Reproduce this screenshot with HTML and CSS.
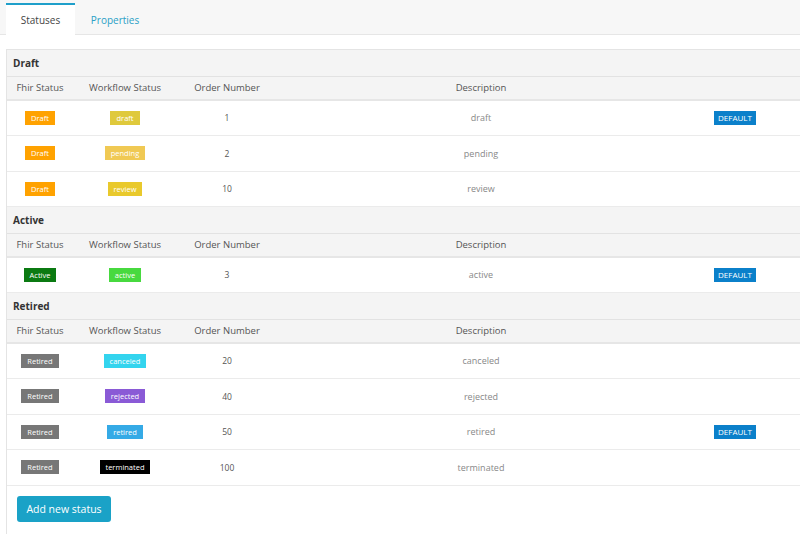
FILE: index.html
```html
<!DOCTYPE html>
<html>
<head>
<meta charset="utf-8">
<link rel="stylesheet" href="styles.css">
</head>
<body>
<div class="tabs">
  <div class="tab active">Statuses</div>
  <div class="tab">Properties</div>
</div>
<div class="panel">
  <div class="table">
    <div class="group">Draft</div>
    <div class="row head"><div>Fhir Status</div><div>Workflow Status</div><div>Order Number</div><div>Description</div><div></div></div>
    <div class="row"><div><span class="badge b-draft">Draft</span></div><div><span class="badge w-draft">draft</span></div><div class="num">1</div><div class="desc">draft</div><div><span class="default">DEFAULT</span></div></div>
    <div class="row"><div><span class="badge b-draft">Draft</span></div><div><span class="badge w-pending">pending</span></div><div class="num">2</div><div class="desc">pending</div><div></div></div>
    <div class="row"><div><span class="badge b-draft">Draft</span></div><div><span class="badge w-review">review</span></div><div class="num">10</div><div class="desc">review</div><div></div></div>

    <div class="group">Active</div>
    <div class="row head"><div>Fhir Status</div><div>Workflow Status</div><div>Order Number</div><div>Description</div><div></div></div>
    <div class="row"><div><span class="badge b-active">Active</span></div><div><span class="badge w-active">active</span></div><div class="num">3</div><div class="desc">active</div><div><span class="default">DEFAULT</span></div></div>

    <div class="group">Retired</div>
    <div class="row head"><div>Fhir Status</div><div>Workflow Status</div><div>Order Number</div><div>Description</div><div></div></div>
    <div class="row"><div><span class="badge b-retired">Retired</span></div><div><span class="badge w-canceled">canceled</span></div><div class="num">20</div><div class="desc">canceled</div><div></div></div>
    <div class="row"><div><span class="badge b-retired">Retired</span></div><div><span class="badge w-rejected">rejected</span></div><div class="num">40</div><div class="desc">rejected</div><div></div></div>
    <div class="row"><div><span class="badge b-retired">Retired</span></div><div><span class="badge w-retired">retired</span></div><div class="num">50</div><div class="desc">retired</div><div><span class="default">DEFAULT</span></div></div>
    <div class="row"><div><span class="badge b-retired">Retired</span></div><div><span class="badge w-terminated">terminated</span></div><div class="num">100</div><div class="desc">terminated</div><div></div></div>
  </div>
  <button class="add">Add new status</button>
</div>
</body>
</html>
```
FILE: styles.css
```css
html, body {
  margin: 0;
  padding: 0;
  background: #fff;
  font-family: "Open Sans", "Liberation Sans", sans-serif;
  color: #555;
  overflow: hidden;
}
.tabs {
  display: flex;
  height: 31px;
  padding: 3px 0 0 6px;
  background: #f7f7f7;
  border-bottom: 1px solid #e6e6e6;
}
.tab {
  width: 69px;
  height: 29px;
  margin-top: 2px;
  font-size: 10px;
  line-height: 30px;
  text-align: center;
  color: #2a9fc6;
}
.tab.active {
  margin-top: 0;
  height: 30px;
  border-top: 2px solid #1f9fca;
  background: #fff;
  color: #444;
  margin-bottom: -1px;
}
.tab + .tab {
  width: 80px;
}
.panel {
  margin: 14px 0 0 6px;
  border-left: 1px solid #e4e4e4;
  height: 486px;
}
.table {
  width: 800px;
  border-top: 1px solid #e4e4e4;
}
.group {
  height: 26px;
  line-height: 26px;
  padding-left: 6px;
  background: #f4f4f4;
  border-bottom: 1px solid #e2e2e2;
  font-size: 10px;
  font-weight: bold;
  color: #333;
}
.row {
  display: grid;
  grid-template-columns: 66px 104px 100px 408px 100px 1fr;
  height: 34.5px;
  align-items: center;
  border-bottom: 1px solid #ebebeb;
  font-size: 8.5px;
  text-align: center;
}
.row.head {
  height: 21.5px;
  background: #f4f4f4;
  border-bottom: 2px solid #e6e6e6;
  font-size: 9.5px;
  color: #555;
}
.num {
  color: #555;
}
.desc {
  color: #888;
  font-size: 9px;
}
.badge {
  display: inline-block;
  height: 14px;
  line-height: 14px;
  padding: 0 5.5px;
  font-size: 7.5px;
  color: #fff;
}
.b-draft { background: #ffa200; padding: 0 6px; }
.b-active { background: #0b7a12; padding: 0 6px; }
.b-retired { background: #777; padding: 0 6px; }
.w-draft { background: #dfc93c; padding: 0 6px; }
.w-pending { background: #f0c954; }
.w-review { background: #e9c92c; }
.w-active { background: #47d93f; padding: 0 6px; }
.w-canceled { background: #33d4ee; }
.w-rejected { background: #8a5ad6; }
.w-retired { background: #35aae6; padding: 0 6px; }
.w-terminated { background: #000; }
.default {
  display: inline-block;
  height: 14px;
  line-height: 14px;
  padding: 0 4px;
  background: #0b80ca;
  color: #fff;
  font-size: 8px;
}
.add {
  margin: 10px 0 0 10px;
  height: 26px;
  width: 94px;
  padding: 0;
  border: none;
  border-radius: 3px;
  background: #1aa2c7;
  color: #fff;
  font-family: "Open Sans", "Liberation Sans", sans-serif;
  font-size: 10.5px;
}
```
